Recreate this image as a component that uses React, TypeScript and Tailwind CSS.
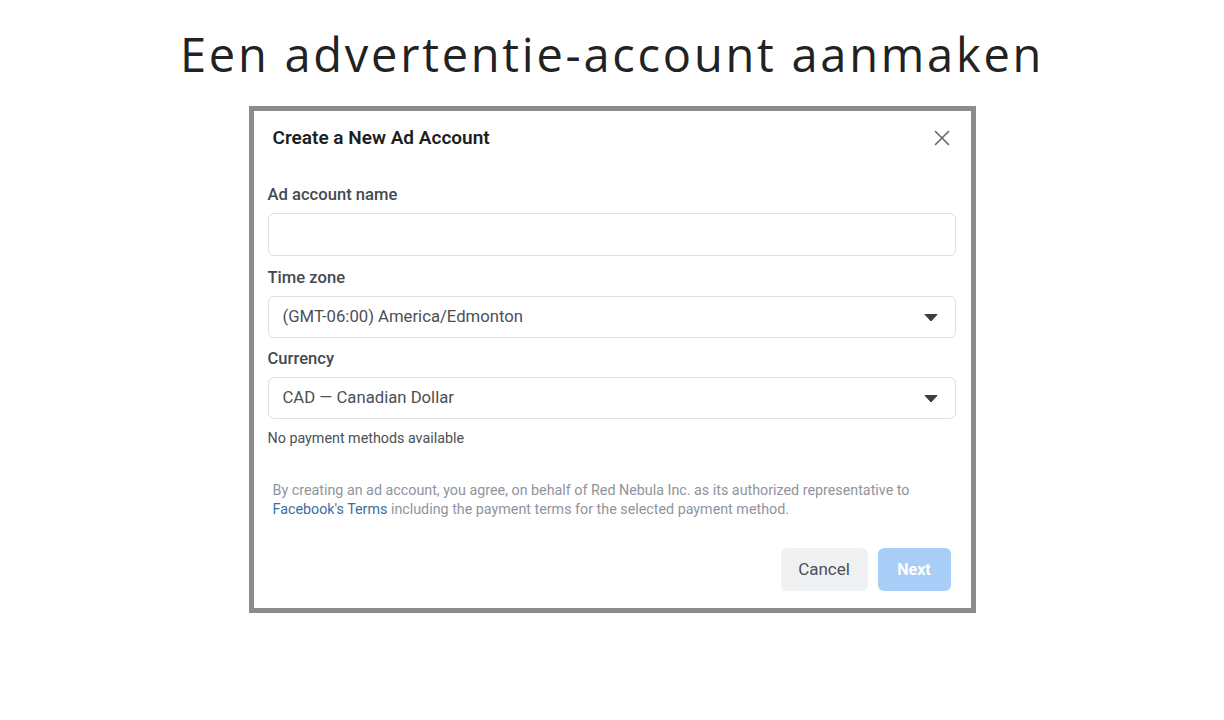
import React from "react";

function Caret() {
  return (
    <svg width="14" height="9" viewBox="0 0 14 9" className="shrink-0">
      <path d="M1 1.5 L13 1.5 L7 8 Z" fill="#3b3e44" stroke="#3b3e44" strokeWidth="1" strokeLinejoin="round" />
    </svg>
  );
}

function Select({ value }: { value: string }) {
  return (
    <div className="h-[42px] rounded-[6px] border border-[#dddfe2] bg-white flex items-center justify-between pl-[14px] pr-[17px]">
      <span className="text-[16.7px] text-[#4b4f56]">{value}</span>
      <Caret />
    </div>
  );
}

function Label({ children }: { children: React.ReactNode }) {
  return <div className="h-[20px] leading-[20px] text-[16.6px] font-medium text-[#444950]">{children}</div>;
}

export default function App() {
  return (
    <div className="w-[1224px] h-[720px] bg-white" style={{ fontFamily: "Roboto, 'Liberation Sans', sans-serif" }}>
      <div className="h-[106px] pt-[25px]">
        <h1
          className="text-center text-[47px] leading-[58px] font-normal text-[#222222] tracking-[2.75px]"
          style={{ fontFamily: "'Open Sans', Lato, sans-serif" }}
        >
          Een advertentie-account aanmaken
        </h1>
      </div>
      <div className="mx-auto w-[727px] h-[507px] border-[5px] border-[#8c8c8c] bg-white flex flex-col">
        <div className="h-[54px] flex items-center justify-between pl-[19px] pr-[21px]">
          <span className="text-[19px] font-semibold text-[#1c1e21]">Create a New Ad Account</span>
          <svg width="16" height="16" viewBox="0 0 16 16">
            <path d="M1.5 1.5 L14.5 14.5 M14.5 1.5 L1.5 14.5" stroke="#606770" strokeWidth="1.6" strokeLinecap="round" />
          </svg>
        </div>
        <div className="pl-[14px] pr-[15px] flex flex-col">
          <div className="mt-[20px]">
            <Label>Ad account name</Label>
          </div>
          <div className="mt-[8px] h-[43px] rounded-[6px] border border-[#dddfe2] bg-white" />
          <div className="mt-[12px]">
            <Label>Time zone</Label>
          </div>
          <div className="mt-[8px]">
            <Select value="(GMT-06:00) America/Edmonton" />
          </div>
          <div className="mt-[11px]">
            <Label>Currency</Label>
          </div>
          <div className="mt-[8px]">
            <Select value="CAD — Canadian Dollar" />
          </div>
          <div className="mt-[10px] h-[18px] leading-[18px] text-[14.3px] text-[#4b4f56]">No payment methods available</div>
          <div className="mt-[34px] pl-[5px] text-[14.3px] leading-[19px] text-[#90949c]">
            By creating an ad account, you agree, on behalf of Red Nebula Inc. as its authorized representative to
            <br />
            <span className="text-[#3a6ea5]">Facebook's Terms</span> including the payment terms for the selected payment method.
          </div>
          <div className="mt-[29px] flex justify-end gap-[10px] pr-[5px]">
            <div className="w-[87px] h-[43px] rounded-[6px] bg-[#f0f1f2] flex items-center justify-center text-[17px] text-[#4b4f56]">
              Cancel
            </div>
            <div className="w-[73px] h-[43px] rounded-[6px] bg-[#a8cdf6] flex items-center justify-center text-[16px] font-bold text-white">
              Next
            </div>
          </div>
        </div>
      </div>
    </div>
  );
}
